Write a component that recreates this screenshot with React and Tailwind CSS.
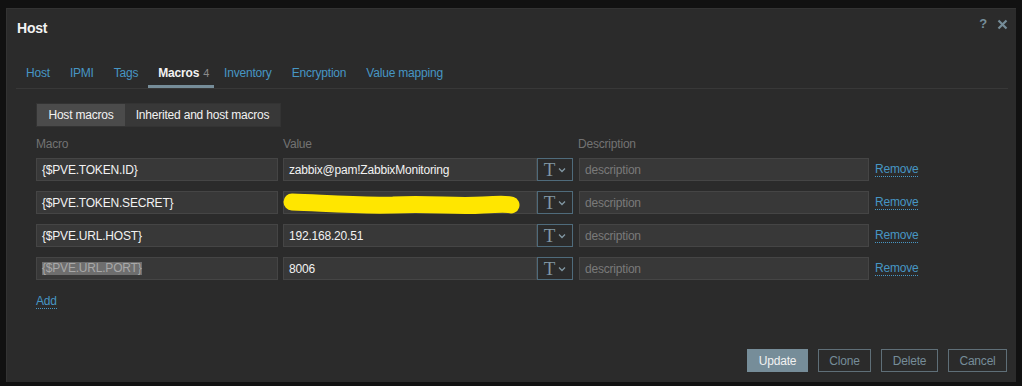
import React from "react";

const font = { fontFamily: '"Liberation Sans", Arial, sans-serif' };

function TBtn() {
  return (
    <div className="flex h-[23px] w-[36px] shrink-0 items-center justify-center gap-[3px] border border-[#4f6b7b] bg-[#2b2b2b]">
      <span
        className="text-[19px] leading-[19px] text-[#8197a3]"
        style={{ fontFamily: '"Liberation Serif", "Times New Roman", serif' }}
      >
        T
      </span>
      <svg width="8" height="6" viewBox="0 0 8 6" className="mt-[1px]">
        <path d="M1 1.5 L4 4.5 L7 1.5" fill="none" stroke="#8197a3" strokeWidth="1.3" />
      </svg>
    </div>
  );
}

function Row({ macro, value, selected, redacted }) {
  return (
    <div className="flex h-[23px] items-center">
      <div className="flex h-[23px] w-[242px] items-center border border-[#454545] bg-[#383838] px-[5px] text-[12px] text-[#f2f2f2]">
        {selected ? (
          <span className="bg-[#6e6e6e] text-[#a8a8a8] leading-[13px]">{macro}</span>
        ) : (
          macro
        )}
      </div>
      <div className="relative ml-[5px] flex h-[23px] w-[254px] items-center border border-[#454545] bg-[#383838] px-[5px] text-[12px] text-[#f2f2f2]">
        {value}
        {redacted && (
          <svg
            className="absolute left-[-1px] top-[0px]"
            width="240"
            height="24"
            viewBox="0 0 240 24"
          >
            <path
              d="M9 10 C 40 11, 70 14, 110 13 C 150 11, 170 15, 200 13 C 215 12, 225 12, 228 13"
              fill="none"
              stroke="#ffe600"
              strokeWidth="17"
              strokeLinecap="round"
            />
          </svg>
        )}
      </div>
      <TBtn />
      <div className="ml-[6px] flex h-[23px] w-[290px] items-center border border-[#454545] bg-[#383838] px-[5px] text-[12px] text-[#7a7a7a]">
        description
      </div>
      <span className="ml-[6px] border-b border-dotted border-[#4796c4] text-[12px] leading-[13px] text-[#4796c4]">
        Remove
      </span>
    </div>
  );
}

export default function App() {
  const tabs = ["Host", "IPMI", "Tags", "Macros", "Inventory", "Encryption", "Value mapping"];
  return (
    <div className="h-[386px] w-[1022px] overflow-hidden bg-[#111111] pl-[6px] pt-[8px] tracking-[-0.2px]" style={font}>
      <div className="relative flex h-[374px] w-[1010px] flex-col border-l border-t border-[#333333] bg-[#2b2b2b]">
        <div className="absolute right-[8px] top-[8px] flex items-center gap-[10px]">
          <span className="text-[13px] font-bold leading-[14px] text-[#768d99]">?</span>
          <svg width="11" height="11" viewBox="0 0 11 11">
            <path d="M1.5 1.5 L9.5 9.5 M9.5 1.5 L1.5 9.5" stroke="#768d99" strokeWidth="2.2" />
          </svg>
        </div>
        <div className="pl-[10px] pt-[11px] text-[14px] font-bold leading-[17px] text-[#f2f2f2]">Host</div>
        <div className="ml-[9px] mr-[8px] mt-[21px] flex border-b border-[#383838]">
          {tabs.map((t) => (
            <div
              key={t}
              className={
                "pb-[5px] pt-[8px] text-[12px] leading-[14px] border-b-[3px] " +
                (t === "Macros"
                  ? "pl-[10px] pr-[5px] border-[#768d99] font-bold text-[#f2f2f2]"
                  : "px-[10px] border-transparent text-[#4796c4]")
              }
            >
              {t}
              {t === "Macros" && <span className="ml-[4px] text-[11px] font-normal text-[#8a8a8a]">4</span>}
            </div>
          ))}
        </div>
        <div className="pl-[29px]">
          <div className="mt-[14px] flex h-[24px] w-[245px] border border-[#333333] text-[12px] text-[#f2f2f2]">
            <div className="flex w-[88px] items-center justify-center bg-[#4b4b4b]">Host macros</div>
            <div className="flex flex-1 items-center justify-center bg-[#383838]">Inherited and host macros</div>
          </div>
          <div className="mt-[10px] flex text-[12px] leading-[14px] text-[#737373]">
            <span className="w-[247px]">Macro</span>
            <span className="w-[295px]">Value</span>
            <span>Description</span>
          </div>
          <div className="mt-[7px] flex flex-col gap-[10px]">
            <Row macro="{$PVE.TOKEN.ID}" value="zabbix@pam!ZabbixMonitoring" />
            <Row macro="{$PVE.TOKEN.SECRET}" value="" redacted />
            <Row macro="{$PVE.URL.HOST}" value="192.168.20.51" />
            <Row macro="{$PVE.URL.PORT}" value="8006" selected />
          </div>
          <div className="mt-[8px]">
            <span className="border-b border-dotted border-[#4796c4] text-[12px] leading-[14px] text-[#4796c4]">Add</span>
          </div>
        </div>
        <div className="mt-auto flex justify-end gap-[10px] pb-[10px] pr-[9px] text-[12px]">
          <div className="flex h-[23px] w-[61px] items-center justify-center border border-[#768d99] bg-[#768d99] text-[#f2f2f2]">Update</div>
          <div className="flex h-[23px] w-[53px] items-center justify-center border border-[#5f6f78] text-[#768d99]">Clone</div>
          <div className="flex h-[23px] w-[57px] items-center justify-center border border-[#5f6f78] text-[#768d99]">Delete</div>
          <div className="flex h-[23px] w-[59px] items-center justify-center border border-[#5f6f78] text-[#768d99]">Cancel</div>
        </div>
      </div>
    </div>
  );
}
